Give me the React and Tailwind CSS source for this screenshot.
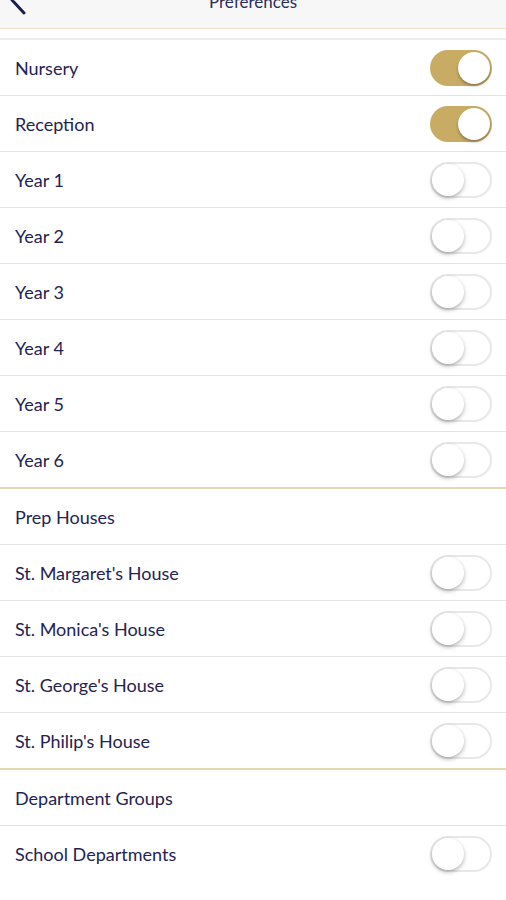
import React from "react";

const font = { fontFamily: "Lato, 'Open Sans', sans-serif" };

function Toggle({ on }) {
  return on ? (
    <div className="relative h-[36px] w-[62px] rounded-full bg-[#c8ac64]">
      <div className="absolute right-[2px] top-[2px] h-[32px] w-[32px] rounded-full bg-white shadow-[0_2px_3px_rgba(0,0,0,0.3)]" />
    </div>
  ) : (
    <div className="relative h-[36px] w-[62px] rounded-full border-2 border-[#e8e8e8] bg-white">
      <div className="absolute left-0 top-0 h-[32px] w-[32px] rounded-full bg-white shadow-[0_2px_4px_rgba(0,0,0,0.3)]" />
    </div>
  );
}

function Row({ label, toggle = true, on = false, border = "gray" }) {
  return (
    <div
      className={
        "flex items-center justify-between pl-[15px] pr-[14px] " +
        (border === "gold"
          ? "h-[57px] border-b-2 border-[#e6d7b3]"
          : border === "none"
          ? "h-[56px]"
          : "h-[56px] border-b border-[#e3e3e3]")
      }
    >
      <span className="text-[18px] leading-[20px] text-[#1f2353]">{label}</span>
      {toggle && <Toggle on={on} />}
    </div>
  );
}

export default function App() {
  return (
    <div className="min-h-[900px] w-[506px] overflow-hidden bg-white" style={font}>
      <div className="relative flex h-[29px] justify-center border-b border-[#f0dfcb] bg-[#f7f7f7]">
        <svg
          className="absolute left-[6px] top-[-14px]"
          width="24"
          height="30"
          viewBox="0 0 24 30"
        >
          <path d="M18 2 L6 14 L18 27" fill="none" stroke="#1c1f4d" strokeWidth="3" strokeLinecap="round" strokeLinejoin="round" />
        </svg>
        <span className="mt-[-8px] text-[17px] leading-[20px] text-[#2b2f5e]">Preferences</span>
      </div>
      <div className="h-[9px]" />
      <div className="border-t-2 border-[#ececec]">
        <Row label="Nursery" on />
        <Row label="Reception" on />
        <Row label="Year 1" />
        <Row label="Year 2" />
        <Row label="Year 3" />
        <Row label="Year 4" />
        <Row label="Year 5" />
        <Row label="Year 6" border="gold" />
        <Row label="Prep Houses" toggle={false} />
        <Row label="St. Margaret's House" />
        <Row label="St. Monica's House" />
        <Row label="St. George's House" />
        <Row label="St. Philip's House" border="gold" />
        <Row label="Department Groups" toggle={false} />
        <Row label="School Departments" border="none" />
      </div>
    </div>
  );
}
